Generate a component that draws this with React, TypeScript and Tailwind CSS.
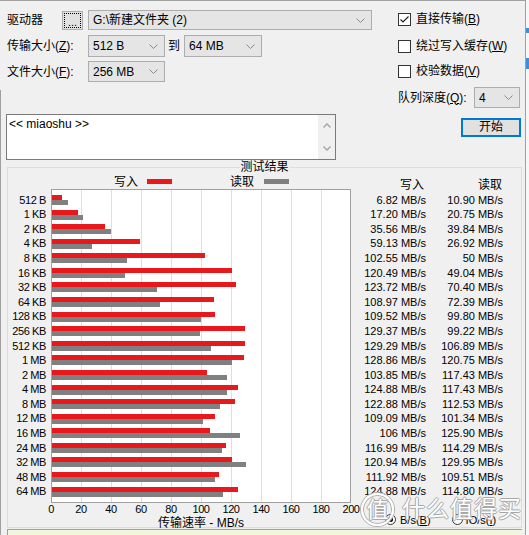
import React from 'react';

const data: [string, string, string][] = [
  ['512 B', '6.82', '10.90'],
  ['1 KB', '17.20', '20.75'],
  ['2 KB', '35.56', '39.84'],
  ['4 KB', '59.13', '26.92'],
  ['8 KB', '102.55', '50'],
  ['16 KB', '120.49', '49.04'],
  ['32 KB', '123.72', '70.40'],
  ['64 KB', '108.97', '72.39'],
  ['128 KB', '109.52', '99.80'],
  ['256 KB', '129.37', '99.22'],
  ['512 KB', '129.29', '106.89'],
  ['1 MB', '128.86', '120.75'],
  ['2 MB', '103.85', '117.43'],
  ['4 MB', '124.88', '117.43'],
  ['8 MB', '122.88', '112.53'],
  ['12 MB', '109.09', '101.34'],
  ['16 MB', '106', '125.90'],
  ['24 MB', '116.99', '114.29'],
  ['32 MB', '120.94', '129.95'],
  ['48 MB', '111.92', '109.51'],
  ['64 MB', '124.88', '114.80'],
];

const ticks = ['0', '20', '40', '60', '80', '100', '120', '140', '160', '180', '200'];
const SCALE = 1.49;

function Chevron({ color = '#8a8a8a' }: { color?: string }) {
  return (
    <svg width="9" height="5" viewBox="0 0 9 5" className="shrink-0">
      <polyline points="0.5,0.5 4.5,4.5 8.5,0.5" fill="none" stroke={color} strokeWidth="1" />
    </svg>
  );
}

function Combo({ className, children }: { className: string; children: React.ReactNode }) {
  return (
    <div className={`flex items-center border border-[#adadad] bg-[#e5e5e5] pl-[4px] pr-[6px] ${className}`}>
      <span className="flex-1 whitespace-nowrap overflow-hidden">{children}</span>
      <Chevron />
    </div>
  );
}

function CheckBox({ checked, children }: { checked?: boolean; children: React.ReactNode }) {
  return (
    <div className="flex items-center h-[15px]">
      <div className="w-[13px] h-[13px] border border-[#333333] bg-white flex items-center justify-center">
        {checked && (
          <svg width="11" height="11" viewBox="0 0 11 11">
            <polyline points="1.5,5.5 4,8 9.5,2.5" fill="none" stroke="#222222" strokeWidth="1.2" />
          </svg>
        )}
      </div>
      <span className="ml-[5px] leading-[15px] whitespace-nowrap">{children}</span>
    </div>
  );
}

function U({ children }: { children: React.ReactNode }) {
  return <span className="underline underline-offset-[1px]">{children}</span>;
}

export default function App() {
  return (
    <div className="w-[529px] h-[535px] overflow-hidden bg-[#f7f7f7] flex text-[12px] text-black font-['Liberation_Sans','Noto_Sans_CJK_SC',sans-serif] relative">
      <div className="w-[526px] h-full bg-[#f0f0f0] border-t border-r border-[#a0a0a0] relative shrink-0">
        {/* top section */}
        <div className="flex pl-[7px]">
          <div className="w-[365px] flex flex-col">
            <div className="mt-[9px] h-[20px] flex items-center">
              <div className="w-[55px] leading-[20px]">驱动器</div>
              <div className="w-[21px] h-[19px] border border-[#adadad] bg-[#e1e1e1] p-[1px]">
                <div className="w-full h-full border border-dotted border-black flex items-end justify-center leading-[10px] text-[11px]">
                  ...
                </div>
              </div>
              <Combo className="ml-[5px] w-[284px] h-[20px]">G:\新建文件夹 (2)</Combo>
            </div>
            <div className="mt-[5px] h-[22px] flex items-center">
              <div className="w-[81px] whitespace-nowrap">
                传输大小(<U>Z</U>):
              </div>
              <Combo className="w-[77px] h-[22px]">512 B</Combo>
              <div className="ml-[3px] w-[16px]">到</div>
              <Combo className="w-[78px] h-[22px]">64 MB</Combo>
            </div>
            <div className="mt-[4px] h-[21px] flex items-center">
              <div className="w-[81px] whitespace-nowrap">
                文件大小(<U>F</U>):
              </div>
              <Combo className="w-[77px] h-[21px]">256 MB</Combo>
            </div>
            <div className="mt-[32px] -ml-[1px] w-[330px] h-[46px] border border-[#7a7a7a] bg-white flex">
              <div className="flex-1 pl-[2px] pt-[2px] leading-[15px]">&lt;&lt; miaoshu &gt;&gt;</div>
              <div className="w-[17px] h-full bg-[#f0f0f0] flex flex-col items-center justify-between py-[8px]">
                <svg width="8" height="5" viewBox="0 0 8 5">
                  <polyline points="0.5,4.5 4,1 7.5,4.5" fill="none" stroke="#a3a3a3" strokeWidth="1.4" />
                </svg>
                <svg width="8" height="5" viewBox="0 0 8 5">
                  <polyline points="0.5,0.5 4,4 7.5,0.5" fill="none" stroke="#a3a3a3" strokeWidth="1.4" />
                </svg>
              </div>
            </div>
          </div>
          <div className="ml-[26px] w-[124px] flex flex-col">
            <div className="mt-[11px]">
              <CheckBox checked>
                直接传输(<U>B</U>)
              </CheckBox>
            </div>
            <div className="mt-[12px]">
              <CheckBox>
                绕过写入缓存(<U>W</U>)
              </CheckBox>
            </div>
            <div className="mt-[10px]">
              <CheckBox>
                校验数据(<U>V</U>)
              </CheckBox>
            </div>
            <div className="mt-[8px] h-[21px] flex items-center justify-between pr-[2px]">
              <span className="whitespace-nowrap">
                队列深度(<U>Q</U>):
              </span>
              <Combo className="w-[46px] h-[21px]">4</Combo>
            </div>
            <div className="mt-[10px] self-end mr-[1px] w-[60px] h-[19px] border-2 border-[#0078d7] bg-[#e1e1e1] flex items-center justify-center leading-[15px]">
              开始
            </div>
          </div>
        </div>

        {/* group box */}
        <div className="mt-[7px] ml-[7px] w-[515px] h-[361px] border border-[#dcdcdc] relative flex">
          <div className="absolute top-[-8px] left-1/2 -translate-x-1/2 bg-[#f0f0f0] px-[1px] leading-[14px] whitespace-nowrap">
            测试结果
          </div>
          {/* left: chart */}
          <div className="w-[345px] flex flex-col">
            <div className="mt-[7px] h-[14px] flex pl-[106px] leading-[14px]">
              <span>写入</span>
              <div className="ml-[9px] mt-[4px] w-[25px] h-[5px] bg-[#e8191c]" />
              <span className="ml-[58px]">读取</span>
              <div className="ml-[10px] mt-[4px] w-[25px] h-[5px] bg-[#808080]" />
            </div>
            <div className="flex h-[314px]">
              <div className="w-[38px] flex flex-col pt-[3.7px] text-[11px] tracking-[-0.4px]">
                {data.map(([label]) => (
                  <div key={label} className="h-[14.58px] flex items-center justify-end whitespace-nowrap">
                    {label}
                  </div>
                ))}
              </div>
              <div className="ml-[5px] w-[300px] h-[314px] border border-[#a0a0a0] bg-white relative">
                {[29, 59, 89, 119, 149, 179, 209, 239, 269].map((x) => (
                  <div key={x} className="absolute top-0 bottom-0 w-px bg-[#dedede]" style={{ left: x }} />
                ))}
                <div className="relative flex flex-col pt-[5px]">
                  {data.map(([label, w, r]) => (
                    <div key={label} className="h-[14.58px] flex flex-col">
                      <div className="h-[5px] bg-[#e8191c]" style={{ width: parseFloat(w) * SCALE }} />
                      <div className="h-[5px] bg-[#808080]" style={{ width: parseFloat(r) * SCALE }} />
                    </div>
                  ))}
                </div>
              </div>
            </div>
            <div className="ml-[28px] h-[12px] flex text-[11px] leading-[12px] tracking-[-0.4px]">
              {ticks.map((t) => (
                <div key={t} className="w-[30px] text-center shrink-0">
                  {t}
                </div>
              ))}
            </div>
            <div className="mt-[1px] ml-[43px] w-[300px] h-[14px] text-center leading-[14px] whitespace-nowrap">
              传输速率 - MB/s
            </div>
          </div>
          {/* right: values */}
          <div className="flex-1 flex flex-col pt-[11px]">
            <div className="h-[13.7px] flex leading-[13.7px]">
              <div className="w-[73px] text-right pr-[2px]">写入</div>
              <div className="w-[77px] text-right pr-[1px]">读取</div>
            </div>
            {data.map(([label, w, r]) => (
              <div key={label} className="h-[14.58px] flex items-center text-[11px] whitespace-nowrap">
                <div className="w-[73px] text-right">{w} MB/s</div>
                <div className="w-[77px] text-right">{r} MB/s</div>
              </div>
            ))}
            <div className="mt-[14px] h-[14px] flex items-center pl-[32px] text-[11px]">
              <div className="w-[11px] h-[11px] rounded-full border border-[#333333] bg-white flex items-center justify-center">
                <div className="w-[5px] h-[5px] rounded-full bg-black" />
              </div>
              <span className="ml-[4px] whitespace-nowrap">
                B/s(<U>B</U>)
              </span>
              <div className="ml-[21px] w-[11px] h-[11px] rounded-full border border-[#333333] bg-white" />
              <span className="ml-[3px] whitespace-nowrap">
                IO/s(<U>I</U>)
              </span>
            </div>
          </div>
        </div>

        {/* status strip */}
        <div className="mt-[1px] ml-[7px] w-[515px] h-[10px] border-t border-l border-[#a0a0a0] bg-[#f3f6df]" />

        {/* left frame line */}
        <div className="absolute left-0 top-[89px] bottom-0 w-px bg-[#a0a0a0]" />

        {/* watermark overlay */}
        <div className="absolute left-[361px] top-[492px] flex items-center text-white [text-shadow:1px_0_0_#a8a8a8,-1px_0_0_#a8a8a8,0_1px_0_#a8a8a8,0_-1px_0_#a8a8a8] pointer-events-none">
          <div className="w-[33px] h-[33px] rounded-full border-2 border-white shadow-[0_0_0_1px_#b0b0b0,inset_0_0_0_1px_#b0b0b0] flex items-center justify-center text-[22px] leading-none">
            值
          </div>
          <div className="ml-[8px] text-[23px] leading-none tracking-[1px] whitespace-nowrap">什么值得买</div>
        </div>
      </div>
      <div className="flex-1 flex flex-col">
        <div className="h-[28px]" />
        <div className="h-[5px] bg-[#3c8fd8]" />
        <div className="h-[25px]" />
        <div className="h-[11px] bg-[#3c8fd8]" />
      </div>
    </div>
  );
}
